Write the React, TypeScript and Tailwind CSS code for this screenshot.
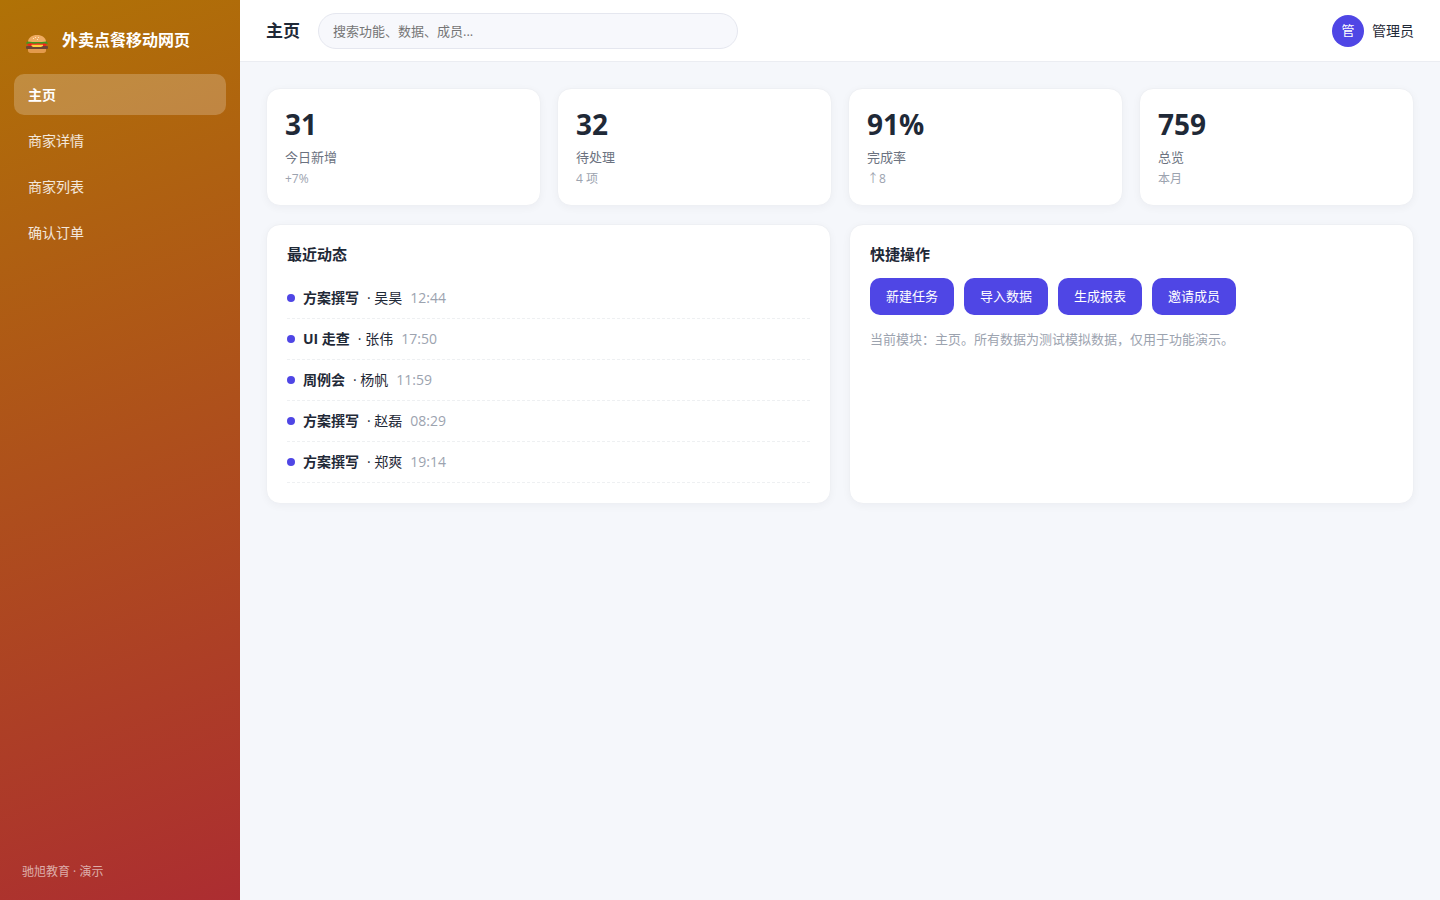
import clsx from "clsx";

const navItems = ["主页", "商家详情", "商家列表", "确认订单"];

const stats = [
  { value: "31", label: "今日新增", note: "+7%" },
  { value: "32", label: "待处理", note: "4 项" },
  { value: "91%", label: "完成率", note: "↑8" },
  { value: "759", label: "总览", note: "本月" },
];

const activities = [
  { title: "方案撰写", user: "吴昊", time: "12:44" },
  { title: "UI 走查", user: "张伟", time: "17:50" },
  { title: "周例会", user: "杨帆", time: "11:59" },
  { title: "方案撰写", user: "赵磊", time: "08:29" },
  { title: "方案撰写", user: "郑爽", time: "19:14" },
];

const actions = ["新建任务", "导入数据", "生成报表", "邀请成员"];

function BurgerIcon() {
  return (
    <svg viewBox="0 0 22 18" className="mt-2 h-[18px] w-[22px] shrink-0" aria-hidden="true">
      <path d="M2 13.5h18v1.8A2.7 2.7 0 0 1 17.300 18H4.700A2.700 2.700 0 0 1 2 15.300z" fill="#e39a4c" />
      <rect x="0" y="11" width="22" height="3" rx="1" fill="#6d4534" />
      <path d="M1.500 8.200h19c.5 1.800-.5 2.800-2 2.800h-15c-1.500 0-2.500-1-2-2.800z" fill="#f0221f" />
      <path d="M5.500 9.800h11.500v1.200l-2 1H7l-1.500-1z" fill="#fdd23c" />
      <path d="M2.500 6.200h17c1.500.3 2.500 1.300 2.300 2.500-1.300.3-2.300-.1-3.300-.5-2.500.8-4.500.3-6.500.1-2.500.5-5 .5-7-.2-1.500.7-3.200.9-4.800.6-.2-1.300.8-2.200 2.300-2.500z" fill="#449a20" />
      <path d="M2 6.500C2.500 2.500 6 0 11 0s8.500 2.500 9 6.500c-5 .8-13 .8-18 0z" fill="#f0ac62" />
      <g fill="#fff0c8">
        <circle cx="7.500" cy="3.500" r=".6" />
        <circle cx="9.500" cy="2.500" r=".6" />
        <circle cx="11.500" cy="4.500" r=".6" />
        <circle cx="12.500" cy="2.500" r=".6" />
      </g>
    </svg>
  );
}

function Sidebar() {
  return (
    <aside className="flex w-60 shrink-0 flex-col bg-[linear-gradient(160deg,#b07206,#ac2d31)] px-3.5 pt-5 pb-5 text-white">
      <div className="mb-3.5 flex h-10 items-center gap-3.5 px-3">
        <BurgerIcon />
        <span className="text-base font-bold">外卖点餐移动网页</span>
      </div>
      <nav className="flex flex-col gap-[5px]">
        {navItems.map((item, index) => (
          <a
            key={item}
            href="#"
            className={clsx(
              "flex h-[41px] items-center rounded-[10px] px-3.5 text-sm",
              index === 0 ? "bg-white/22 font-semibold" : "text-white/85"
            )}
          >
            {item}
          </a>
        ))}
      </nav>
      <p className="mt-auto px-2 text-xs leading-4 text-white/60">驰旭教育 · 演示</p>
    </aside>
  );
}

function Header() {
  return (
    <header className="flex h-[62px] items-center gap-[18px] border-b border-[#ebedf2] bg-white px-[26px]">
      <h1 className="text-[17px] font-bold">主页</h1>
      <input
        type="search"
        aria-label="搜索"
        placeholder="搜索功能、数据、成员..."
        className="h-9 w-full max-w-[420px] rounded-full border border-[#e5e7ef] bg-[#f7f8fc] px-3.5 text-[13px] outline-none placeholder:text-[#757575]"
      />
      <div className="ml-auto flex shrink-0 items-center gap-2">
        <span className="flex size-8 items-center justify-center rounded-full bg-[#4f46e5] text-[13px] text-white">
          管
        </span>
        <span className="text-sm">管理员</span>
      </div>
    </header>
  );
}

export default function App() {
  return (
    <div className="flex min-h-screen bg-[#f5f7fb] font-['Open_Sans','Noto_Sans_CJK_SC',sans-serif] text-[#1f2937]">
      <Sidebar />
      <div className="min-w-0 flex-1">
        <Header />
        <main className="flex flex-col gap-[18px] p-[26px]">
          <section className="grid grid-cols-4 gap-4">
            {stats.map((stat) => (
              <div
                key={stat.label}
                className="rounded-[14px] border border-[#eef0f4] bg-white p-[18px] shadow-[0_2px_8px_rgba(20,20,50,0.04)]"
              >
                <div className="text-[28px] leading-[34px] font-bold">{stat.value}</div>
                <div className="mt-1.5 text-[13px] leading-5 text-[#6b7280]">{stat.label}</div>
                <div className="mt-1 text-xs leading-4 text-[#9ca3af]">{stat.note}</div>
              </div>
            ))}
          </section>

          <div className="grid grid-cols-2 gap-[18px]">
            <section className="rounded-[14px] border border-[#eef0f4] bg-white p-5 shadow-[0_2px_8px_rgba(20,20,50,0.04)]">
              <h2 className="mb-3.5 text-[15px] leading-[19px] font-bold">最近动态</h2>
              <ul>
                {activities.map((activity) => (
                  <li
                    key={activity.time}
                    className="flex h-[41px] items-center gap-2 border-b border-dashed border-[#eef0f2] text-sm"
                  >
                    <span className="size-2 rounded-full bg-[#4f46e5]" />
                    <b>{activity.title}</b>
                    <span>· {activity.user}</span>
                    <time className="text-[#9ca3af]">{activity.time}</time>
                  </li>
                ))}
              </ul>
            </section>

            <section className="rounded-[14px] border border-[#eef0f4] bg-white p-5 shadow-[0_2px_8px_rgba(20,20,50,0.04)]">
              <h2 className="mb-3.5 text-[15px] leading-[19px] font-bold">快捷操作</h2>
              <div className="flex flex-wrap gap-2.5">
                {actions.map((action) => (
                  <button
                    key={action}
                    type="button"
                    className="h-[37px] rounded-[10px] bg-[#4f46e5] px-4 text-[13px] text-white"
                  >
                    {action}
                  </button>
                ))}
              </div>
              <p className="mt-3.5 text-[13px] leading-5 text-[#9ca3af]">
                当前模块：主页。所有数据为测试模拟数据，仅用于功能演示。
              </p>
            </section>
          </div>
        </main>
      </div>
    </div>
  );
}
